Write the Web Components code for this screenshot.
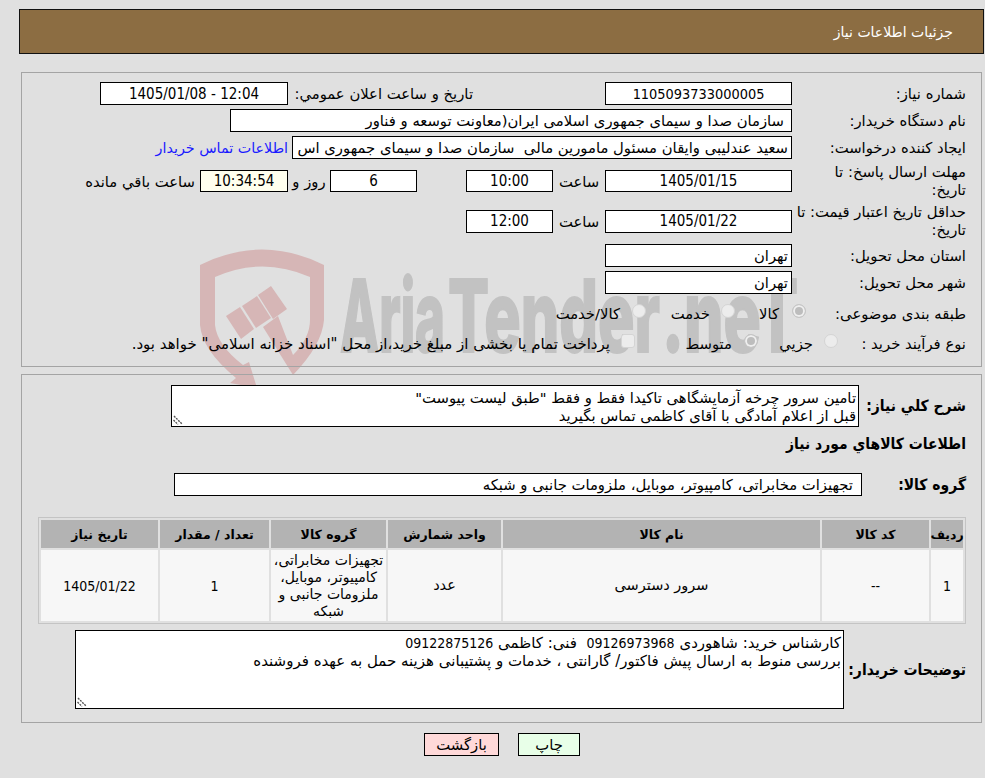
<!DOCTYPE html>
<html lang="fa" dir="rtl">
<head>
<meta charset="utf-8">
<title>جزئیات اطلاعات نیاز</title>
<style>
  html, body { margin: 0; padding: 0; }
  body {
    position: relative;
    width: 985px;
    height: 778px;
    overflow: hidden;
    background: #e0e0e0;
    color: #000;
    font: 14.8px "DejaVu Sans", sans-serif;
    direction: rtl;
  }
  .link { color: #1a1aff; white-space: nowrap; font-size: 14.3px; }
  .num { font: 15px "DejaVu Sans Condensed", "DejaVu Sans", sans-serif; font-stretch: condensed; }
  .id { font-size: 14.4px; }
  .tel { font-size: 14px; }
</style>
</head>
<body>
<water-mark></water-mark>
<page-banner>جزئیات اطلاعات نیاز</page-banner>

<form-panel style="margin-top:18px;height:295px;padding-top:9px">
  <form-row label="شماره نیاز:">
    <value-box width="187"><span class="num id">1105093733000005</span></value-box>
    <row-text style="margin-right:132px;width:181px">تاريخ و ساعت اعلان عمومي:</row-text>
    <value-box width="188" style="margin-right:4px"><span class="num">12:04 - 1405/01/08</span></value-box>
  </form-row>
  <form-row label="نام دستگاه خریدار:" style="margin-top:4px">
    <value-box width="562" align="start" pad="7">سازمان صدا و سیمای جمهوری اسلامی ایران(معاونت توسعه و فناور</value-box>
  </form-row>
  <form-row label="ایجاد کننده درخواست:" style="margin-top:4px">
    <value-box width="500" align="start" pad="3">سعید عندلیبی وایقان مسئول مامورین مالی&nbsp; سازمان صدا و سیمای جمهوری اس</value-box>
    <row-text style="margin-right:4px"><span class="link">اطلاعات تماس خریدار</span></row-text>
  </form-row>
  <form-row label="مهلت ارسال پاسخ: تا&lt;br&gt;تاریخ:" height="36" style="margin-top:4px">
    <value-box width="187" height="22"><span class="num">1405/01/15</span></value-box>
    <row-text style="width:52px;justify-content:center">ساعت</row-text>
    <value-box width="87" height="22"><span class="num">10:00</span></value-box>
    <value-box width="87" height="22" style="margin-right:49px"><span class="num">6</span></value-box>
    <row-text style="width:42px;justify-content:center">روز و</row-text>
    <value-box width="88" height="22" fill="#ffffee"><span class="num">10:34:54</span></value-box>
    <row-text style="margin-right:5px">ساعت باقي مانده</row-text>
  </form-row>
  <form-row label="حداقل تاریخ اعتبار قیمت: تا&lt;br&gt;تاریخ:" height="36" style="margin-top:4px">
    <value-box width="187"><span class="num">1405/01/22</span></value-box>
    <row-text style="width:52px;justify-content:center">ساعت</row-text>
    <value-box width="87"><span class="num">12:00</span></value-box>
  </form-row>
  <form-row label="استان محل تحویل:" style="margin-top:5px">
    <value-box width="187" align="start" pad="3">تهران</value-box>
  </form-row>
  <form-row label="شهر محل تحویل:" style="margin-top:4px">
    <value-box width="187" align="start" pad="3">تهران</value-box>
  </form-row>
  <form-row label="طبقه بندی موضوعی:" label-width="160" style="margin-top:8px">
    <choice-item checked gap="13" style="width:70px">کالا</choice-item>
    <choice-item gap="11" style="width:89px;margin-right:1px">خدمت</choice-item>
    <choice-item gap="12">کالا/خدمت</choice-item>
  </form-row>
  <form-row label="نوع فرآیند خرید :" label-width="128" style="margin-top:7px">
    <choice-item gap="11" style="width:80px">جزيي</choice-item>
    <choice-item checked gap="12" style="width:123px">متوسط</choice-item>
    <choice-item square gap="11" style="font-size:15px">پرداخت تمام یا بخشی از مبلغ خرید،از محل "اسناد خزانه اسلامی" خواهد بود.</choice-item>
  </form-row>
</form-panel>

<form-panel style="margin-top:7px;height:349px;padding-top:10px">
  <form-row label="شرح کلي نياز:" bold label-width="107" height="42">
    <note-box width="688" height="42">تامین سرور چرخه آزمایشگاهی تاکیدا فقط و فقط "طبق لیست پیوست"<br>قبل از اعلام آمادگی با آقای کاظمی تماس بگیرید</note-box>
  </form-row>
  <form-row label="اطلاعات کالاهاي مورد نياز" bold label-width="400" height="20" style="margin-top:7px"></form-row>
  <form-row label="گروه کالا:" bold label-width="104" style="margin-top:19px">
    <value-box width="688" align="start" pad="8">تجهیزات مخابراتی، کامپیوتر، موبایل، ملزومات جانبی و شبکه</value-box>
  </form-row>
  <item-table style="margin-top:21px"></item-table>
  <form-row label="توضیحات خریدار:" bold label-width="122" height="79" style="margin-top:6px">
    <note-box width="769" height="79" style="font-size:15px">کارشناس خرید: شاهوردی <span class="num tel">09126973968</span>&nbsp; فنی: کاظمی <span class="num tel">09122875126</span><br>بررسی منوط به ارسال پیش فاکتور/ گارانتی ، خدمات و پشتیبانی هزینه حمل به عهده فروشنده</note-box>
  </form-row>
</form-panel>

<action-bar>
  <action-button fill="#e8ffe8" width="62">چاپ</action-button>
  <action-button fill="#ffd9d9" width="75">بازگشت</action-button>
</action-bar>

<template id="item-table-tpl">
  <style>
    :host { display: block; margin-left: 16px; }
    .grid {
      display: grid;
      grid-template-columns: 32px 107px 317px 113px 115px 109px 117px;
      grid-template-rows: 28px 71px;
      gap: 2px;
      padding: 2px;
      border: 1px solid #c4c4c4;
      background: #e0e0e0;
    }
    .th, .td { display: flex; align-items: center; justify-content: center; text-align: center; }
    .th { background: #b3b3b3; font-weight: bold; font-size: 12.5px; }
    .td { background: #f7f7f7; font-size: 14.5px; line-height: 17px; }
    .td.group { font-size: 14px; }
    .num { font: 14px "DejaVu Sans Condensed", "DejaVu Sans", sans-serif; font-stretch: condensed; }
  </style>
  <div class="grid">
    <div class="th">ردیف</div><div class="th">کد کالا</div><div class="th">نام کالا</div><div class="th">واحد شمارش</div><div class="th">گروه کالا</div><div class="th">تعداد / مقدار</div><div class="th">تاریخ نیاز</div>
    <div class="td num">1</div><div class="td num">--</div><div class="td">سرور دسترسی</div><div class="td">عدد</div><div class="td group">تجهیزات مخابراتی، کامپیوتر، موبایل، ملزومات جانبی و شبکه</div><div class="td num">1</div><div class="td num">1405/01/22</div>
  </div>
</template>

<script>
  class PageBanner extends HTMLElement {
    connectedCallback() {
      this.attachShadow({ mode: 'open' });
      this.shadowRoot.innerHTML = `
        <style>
          :host {
            display: flex; align-items: center; box-sizing: border-box;
            height: 45px; margin: 9px 1px 0 19px; padding: 0 30px;
            background: #8c6d42; border: 1px solid #111; color: #fff; font-size: 14px;
          }
        </style>
        <slot></slot>`;
    }
  }

  class FormPanel extends HTMLElement {
    connectedCallback() {
      this.attachShadow({ mode: 'open' });
      this.shadowRoot.innerHTML = `
        <style>
          :host {
            display: block; box-sizing: border-box;
            margin: 0 3px 0 21px; padding-right: 15px;
            border: 1px solid #a4a4a4;
          }
        </style>
        <slot></slot>`;
    }
  }

  class FormRow extends HTMLElement {
    connectedCallback() {
      const w = this.getAttribute('label-width') || 174;
      const h = this.getAttribute('height') || 23;
      const bold = this.hasAttribute('bold');
      this.attachShadow({ mode: 'open' });
      this.shadowRoot.innerHTML = `
        <style>
          :host { display: flex; align-items: center; height: ${h}px; }
          .label { flex: none; width: ${w}px; box-sizing: border-box; line-height: 18px; }
          .bold { font: bold 15.5px "DejaVu Sans Condensed", "DejaVu Sans", sans-serif; font-stretch: condensed; }
          .body { display: flex; align-items: center; }
        </style>
        <div class="label ${bold ? 'bold' : ''}">${this.getAttribute('label')}</div>
        <div class="body"><slot></slot></div>`;
    }
  }

  class ValueBox extends HTMLElement {
    connectedCallback() {
      const start = this.getAttribute('align') === 'start';
      const pad = this.getAttribute('pad') || 5;
      this.attachShadow({ mode: 'open' });
      this.shadowRoot.innerHTML = `
        <style>
          :host {
            display: flex; flex: none; align-items: center; box-sizing: border-box; overflow: hidden;
            justify-content: ${start ? 'flex-start' : 'center'};
            width: ${this.getAttribute('width')}px; height: ${this.getAttribute('height') || 23}px;
            padding: 0 ${start ? pad : 0}px; white-space: nowrap;
            background: ${this.getAttribute('fill') || '#fff'}; border: 1px solid #000;
          }
        </style>
        <slot></slot>`;
    }
  }

  class RowText extends HTMLElement {
    connectedCallback() {
      this.attachShadow({ mode: 'open' });
      this.shadowRoot.innerHTML = `
        <style>:host { display: flex; flex: none; align-items: center; white-space: nowrap; }</style>
        <slot></slot>`;
    }
  }

  class ChoiceItem extends HTMLElement {
    connectedCallback() {
      const on = this.hasAttribute('checked');
      const square = this.hasAttribute('square');
      this.attachShadow({ mode: 'open' });
      this.shadowRoot.innerHTML = `
        <style>
          :host { display: flex; flex: none; align-items: center; gap: ${this.getAttribute('gap') || 10}px; white-space: nowrap; }
          .mark {
            flex: none; box-sizing: border-box; width: 14px; height: 14px; margin-top: -6px;
            border: 1px solid #d4d4d4; background: #ececec;
            border-radius: ${square ? '3px' : '50%'};
            ${on ? 'background: #bdbdbd; box-shadow: inset 0 0 0 2px #efefef; border-color: #c6c6c6;' : ''}
          }
        </style>
        <span class="mark"></span><slot></slot>`;
    }
  }

  class NoteBox extends HTMLElement {
    connectedCallback() {
      this.attachShadow({ mode: 'open' });
      this.shadowRoot.innerHTML = `
        <style>
          :host {
            display: block; position: relative; flex: none; box-sizing: border-box;
            width: ${this.getAttribute('width')}px; height: ${this.getAttribute('height')}px;
            padding: 3px 2px 0; background: #fff; border: 1px solid #000; line-height: 18px;
          }
          svg { position: absolute; left: 1px; bottom: 1px; }
        </style>
        <slot></slot>
        <svg width="10" height="10" viewBox="0 0 10 10" fill="none" stroke="#555" stroke-width="1.4" stroke-dasharray="2 1">
          <path d="M1 1 L9 9 M0.5 5 L5 9.5"/>
        </svg>`;
    }
  }

  class ItemTable extends HTMLElement {
    connectedCallback() {
      this.attachShadow({ mode: 'open' });
      this.shadowRoot.appendChild(document.getElementById('item-table-tpl').content.cloneNode(true));
    }
  }

  class ActionBar extends HTMLElement {
    connectedCallback() {
      this.attachShadow({ mode: 'open' });
      this.shadowRoot.innerHTML = `
        <style>:host { display: flex; gap: 19px; margin: 10px 405px 0 0; }</style>
        <slot></slot>`;
    }
  }

  class ActionButton extends HTMLElement {
    connectedCallback() {
      this.attachShadow({ mode: 'open' });
      this.shadowRoot.innerHTML = `
        <style>
          :host {
            display: flex; align-items: center; justify-content: center; box-sizing: border-box;
            width: ${this.getAttribute('width')}px; height: 23px;
            background: ${this.getAttribute('fill')}; border: 1px solid #000;
          }
        </style>
        <slot></slot>`;
    }
  }

  class WaterMark extends HTMLElement {
    connectedCallback() {
      this.attachShadow({ mode: 'open' });
      this.shadowRoot.innerHTML = `
        <style>
          :host { position: absolute; left: 0; top: 0; z-index: -1; direction: ltr; }
          svg { display: block; }
          text { font: 800 100px Inter, Lato, "Liberation Sans", sans-serif; fill: #c2c2c2; stroke: #c2c2c2; stroke-width: 2px; }
        </style>
        <svg width="985" height="400" viewBox="0 0 985 400">
          <g fill="#d6b6b6">
            <path d="M200 265 Q262 234 324 265 L324 320 Q322 345 293 375 L263 327 L278 316 L293 355 Q310 338 310 320 L310 277 Q262 256 215 277 L215 325 Q217 345 243 365 L249 362 L257 388 L230 383 L236 378 Q202 350 200 325 Z"/>
            <path d="M226 316 L240 307 L254 329 L241 339 Z"/>
            <path d="M242 306 L257 296 L271 318 L256 328 Z"/>
            <path d="M258 295 L271 286 L287 309 L273 319 Z"/>
          </g>
          <text x="340" y="352" textLength="105" lengthAdjust="spacingAndGlyphs">Aria</text>
          <text x="448" y="352" textLength="212" lengthAdjust="spacingAndGlyphs">Tender</text>
          <text x="662" y="352" textLength="136" lengthAdjust="spacingAndGlyphs">.neT</text>
        </svg>`;
    }
  }

  customElements.define('page-banner', PageBanner);
  customElements.define('form-panel', FormPanel);
  customElements.define('form-row', FormRow);
  customElements.define('value-box', ValueBox);
  customElements.define('row-text', RowText);
  customElements.define('choice-item', ChoiceItem);
  customElements.define('note-box', NoteBox);
  customElements.define('item-table', ItemTable);
  customElements.define('action-bar', ActionBar);
  customElements.define('action-button', ActionButton);
  customElements.define('water-mark', WaterMark);
</script>
</body>
</html>
